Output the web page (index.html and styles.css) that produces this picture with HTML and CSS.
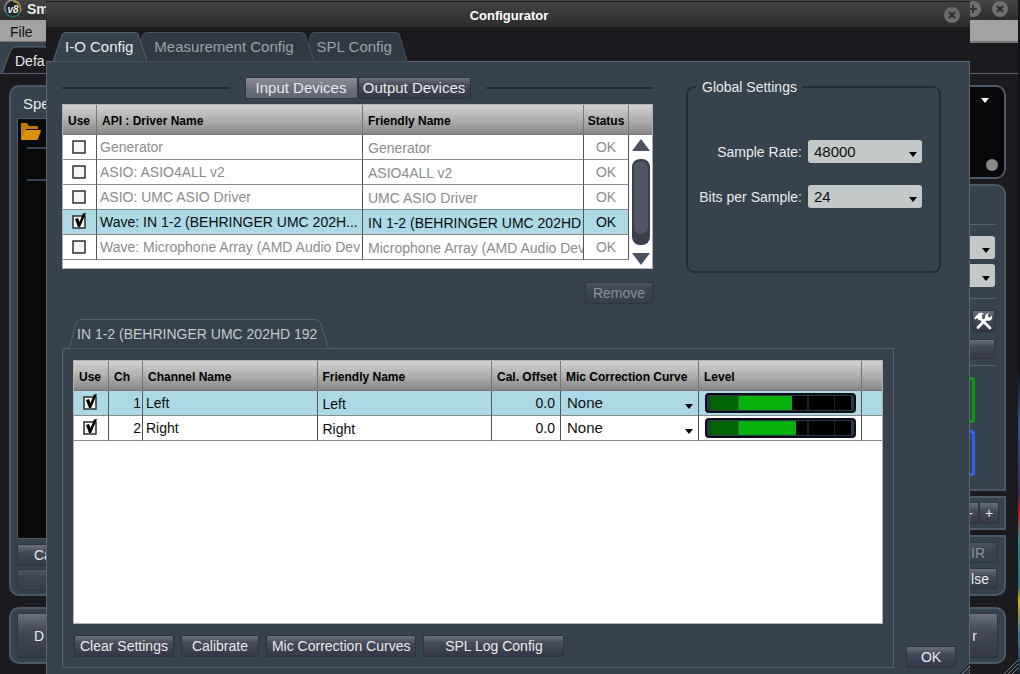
FILE: index.html
```html
<!doctype html>
<html lang="en">
<head>
    <meta charset="UTF-8">
    <title>Configurator</title>
    <link rel="stylesheet" href="styles.css">
</head>
<body>
<!-- main window -->
<div class="window">
    <div class="titlebar">
        <svg class="logo" width="18" height="18" viewBox="0 0 18 18">
            <circle cx="9" cy="9" r="8" fill="#1d2326"/>
            <path d="M2 12A7.6 7.6 0 0 1 15 4" fill="none" stroke="#8d8f8c" stroke-width="1.5"/>
            <path d="M9 1.4A7.6 7.6 0 0 1 16 12" fill="none" stroke="#b98f35" stroke-width="1.6"/>
            <path d="M2 12A7.6 7.6 0 0 0 16 12" fill="none" stroke="#1f6d62" stroke-width="1.8"/>
            <text x="9" y="13" text-anchor="middle" class="logo-text">v8</text>
        </svg>
        <span class="app-name">Sm</span>
        <button class="round" aria-label="Maximize">
            <svg width="16" height="16" viewBox="0 0 16 16"><circle cx="8" cy="8" r="8" fill="#6f6f6f"/><path d="M8 4v8M4 8h8" stroke="#333" stroke-width="2"/></svg>
        </button>
        <button class="round" aria-label="Close window">
            <svg width="16" height="16" viewBox="0 0 16 16"><circle cx="8" cy="8" r="8" fill="#6f6f6f"/><path d="M5 5l6 6M11 5l-6 6" stroke="#333" stroke-width="2.4"/></svg>
        </button>
    </div>
    <div class="menubar"><button>File</button></div>
    <div class="view-tabs">
        <svg width="80" height="32" viewBox="0 0 80 32"><path d="M0 0H80V5H16Q12 5 10 10L3 31H0Z" fill="#36424e"/><path d="M0 31.5H2L10 10Q12 5 16 5H80" fill="none" stroke="#56646f"/></svg>
        <button>Defa</button>
    </div>
    <div class="main">
        <div class="column left">
            <div class="panel grow">
                <h2>Spe</h2>
                <div class="data-list">
                    <svg width="22" height="18" viewBox="0 0 22 18"><path d="M1 16V1q0-1 1-1h5l2 3h8q1 0 1 1v2H6L2 17Z" fill="#c27c05"/><path d="M5 7h15q1 0 1 1l-3 8q0 1-2 1H1Z" fill="#dd920c"/></svg>
                    <hr><hr>
                </div>
                <button class="btn">Ca</button>
                <button class="btn dim" aria-label="Empty"></button>
            </div>
            <div class="panel dock"><button class="btn">D</button></div>
        </div>
        <div class="column right">
            <div class="panel meter-view">
                <svg width="8" height="5" viewBox="0 0 8 5"><path d="M0 0h8L4 5Z" fill="#fff"/></svg>
                <span class="dot"></span>
            </div>
            <div class="panel grow controls">
                <hr>
                <select aria-label="Banding"><option></option></select>
                <select aria-label="Averaging"><option></option></select>
                <hr>
                <button class="btn tool" aria-label="Settings">
                    <svg width="19" height="18" viewBox="0 0 19 18"><path d="M6 6L16 16M13 6L4 15.500" stroke="#fff" stroke-width="2.800" stroke-linecap="round"/><path d="M0 6L5 1q3-1 5 1L7.500 3l1 2-3.500 3.500-2-2.500-1.500 1.500Z" fill="#fff"/><path d="M11 7q-1-5 4-6l-1.500 3 2 1.500 2.500-2q1 5-4 5.500Z" fill="#fff"/></svg>
                </button>
                <button class="btn flat" aria-label="Preset"></button>
                <hr>
                <div class="engine green"></div>
                <div class="engine blue"></div>
            </div>
            <div class="panel square pair"><button class="btn">-</button><button class="btn plus">+</button></div>
            <div class="panel low">
                <button class="btn dim">IR</button>
                <button class="btn">lse</button>
            </div>
            <div class="panel dock"><button class="btn">r</button></div>
        </div>
    </div>
    <svg class="grip" width="14" height="14" viewBox="0 0 14 14"><path d="M0 14L14 0M4 14L14 4M8 14L14 8" stroke="#7d7d80"/></svg>
</div>

<!-- configurator dialog -->
<div class="dialog" role="dialog" aria-labelledby="dialog-title">
    <div class="dialog-title">
        <h1 id="dialog-title">Configurator</h1>
        <button class="round" aria-label="Close">
            <svg width="16" height="16" viewBox="0 0 16 16"><circle cx="8" cy="8" r="8" fill="#6a6a6a"/><path d="M5 5l6 6M11 5l-6 6" stroke="#303030" stroke-width="2.4"/></svg>
        </button>
    </div>
    <div class="tabs">
        <button class="tab active">
            <svg width="94" height="30" viewBox="0 0 94 30" preserveAspectRatio="none"><path d="M0 29.5L9 3Q10 .5 13 .5H81Q84 .5 85 3L94 29.5"/></svg>
            <span>I-O Config</span>
        </button>
        <button class="tab second">
            <svg width="174" height="30" viewBox="0 0 174 30" preserveAspectRatio="none"><path d="M0 29.5V8L2 3Q3 .5 6 .5H161Q164 .5 165 3L174 29.5"/></svg>
            <span>Measurement Config</span>
        </button>
        <button class="tab third">
            <svg width="98" height="30" viewBox="0 0 98 30" preserveAspectRatio="none"><path d="M0 29.5V8L2 3Q3 .5 6 .5H86Q89 .5 90 3L98 29.5"/></svg>
            <span>SPL Config</span>
        </button>
    </div>
    <div class="dialog-body">
        <div class="top">
            <div class="devices">
                <div class="switch">
                    <span class="rule"></span>
                    <div class="switch-buttons">
                        <button class="btn on">Input Devices</button><button class="btn">Output Devices</button>
                    </div>
                    <span class="rule"></span>
                </div>
                <div class="device-list">
                    <table class="device-table">
                        <thead>
                            <tr><th class="use">Use</th><th>API : Driver Name</th><th class="friendly">Friendly Name</th><th class="status">Status</th></tr>
                        </thead>
                        <tbody>
                            <tr>
                                <td class="use"><input type="checkbox" aria-label="Use Generator"></td>
                                <td>Generator</td><td class="friendly">Generator</td><td class="status">OK</td>
                            </tr>
                            <tr>
                                <td class="use"><input type="checkbox" aria-label="Use ASIO4ALL"></td>
                                <td>ASIO: ASIO4ALL v2</td><td class="friendly">ASIO4ALL v2</td><td class="status">OK</td>
                            </tr>
                            <tr>
                                <td class="use"><input type="checkbox" aria-label="Use UMC ASIO Driver"></td>
                                <td>ASIO: UMC ASIO Driver</td><td class="friendly">UMC ASIO Driver</td><td class="status">OK</td>
                            </tr>
                            <tr class="selected">
                                <td class="use"><input type="checkbox" checked aria-label="Use IN 1-2"></td>
                                <td>Wave: IN 1-2 (BEHRINGER UMC 202H...</td><td class="friendly">IN 1-2 (BEHRINGER UMC 202HD</td><td class="status">OK</td>
                            </tr>
                            <tr>
                                <td class="use"><input type="checkbox" aria-label="Use Microphone Array"></td>
                                <td>Wave: Microphone Array (AMD Audio Dev</td><td class="friendly">Microphone Array (AMD Audio Dev</td><td class="status">OK</td>
                            </tr>
                        </tbody>
                    </table>
                    <div class="scroll">
                        <div class="scroll-head"></div>
                        <svg width="20" height="128" viewBox="0 0 20 128">
                            <path d="M10 1L19 13H1Z" fill="#4b5161"/>
                            <rect x="1" y="21" width="18" height="86" rx="8" fill="#3a404d"/>
                            <rect x="3" y="23" width="14" height="73" rx="7" fill="#505666"/>
                            <path d="M10 127L19 115H1Z" fill="#4b5161"/>
                        </svg>
                    </div>
                </div>
                <button class="btn dim remove" disabled>Remove</button>
            </div>
            <fieldset class="global">
                <legend>Global Settings</legend>
                <div class="field">
                    <label for="rate">Sample Rate:</label>
                    <select id="rate"><option>48000</option></select>
                </div>
                <div class="field">
                    <label for="bits">Bits per Sample:</label>
                    <select id="bits"><option>24</option></select>
                </div>
            </fieldset>
        </div>
        <div class="bottom">
            <div class="channels">
                <div class="tabs sub">
                    <button class="tab active">
                        <svg width="264" height="30" viewBox="0 0 264 30" preserveAspectRatio="none"><path d="M0 29.5Q2 29.5 3 27L9 4Q10 .5 14 .5H250Q254 .5 255 4L262 26Q263 29.5 264 29.5"/></svg>
                        <span>IN 1-2 (BEHRINGER UMC 202HD 192</span>
                    </button>
                </div>
                <div class="channel-panel">
                    <div class="channel-list">
                        <table class="channel-table">
                            <thead>
                                <tr><th class="use">Use</th><th class="ch">Ch</th><th>Channel Name</th><th>Friendly Name</th><th class="offset">Cal. Offset</th><th class="curve">Mic Correction Curve</th><th class="level">Level</th><th class="end"></th></tr>
                            </thead>
                            <tbody>
                                <tr class="selected">
                                    <td class="use"><input type="checkbox" checked aria-label="Use channel 1"></td>
                                    <td class="ch">1</td><td>Left</td><td class="friendly">Left</td><td class="offset">0.0</td>
                                    <td class="curve"><select aria-label="Curve for channel 1"><option>None</option></select></td>
                                    <td class="level"><div class="meter"><div class="track"><div class="fill" style="width: 58%"></div></div></div></td>
                                    <td class="end"></td>
                                </tr>
                                <tr>
                                    <td class="use"><input type="checkbox" checked aria-label="Use channel 2"></td>
                                    <td class="ch">2</td><td>Right</td><td class="friendly">Right</td><td class="offset">0.0</td>
                                    <td class="curve"><select aria-label="Curve for channel 2"><option>None</option></select></td>
                                    <td class="level"><div class="meter"><div class="track"><div class="fill" style="width: 61%"></div></div></div></td>
                                    <td class="end"></td>
                                </tr>
                            </tbody>
                        </table>
                    </div>
                    <div class="actions">
                        <button class="btn">Clear Settings</button>
                        <button class="btn">Calibrate</button>
                        <button class="btn">Mic Correction Curves</button>
                        <button class="btn wide">SPL Log Config</button>
                    </div>
                </div>
            </div>
            <button class="btn ok">OK</button>
        </div>
    </div>
    <svg class="grip" width="10" height="10" viewBox="0 0 10 10"><path d="M0 10L10 0M4 10L10 4M7 10L10 7" stroke="#15171b"/><path d="M2 10L10 2" stroke="#77808a"/></svg>
</div>
</body>
</html>
```

FILE: styles.css
```css
* {
    box-sizing: border-box;
    margin: 0;
    padding: 0;
}

body {
    height: 100vh;
    min-height: 640px;
    position: relative;
    overflow: hidden;
    font: 14px/18px "Liberation Sans", Arial, sans-serif;
    color: #e8eaec;
    background: linear-gradient(#15141a 55%, #2c4f9c 63%, #3a2a60 73%, #d01010 76%, #2f8a8c 80%, #1d6f7c 87%, #e0b010 89%, #3080a0 94%, #123 100%);
}

button,
select {
    font: inherit;
    color: inherit;
    border: 0;
    background: none;
}

hr {
    border: 0;
    height: 1px;
    background: #56646f;
}

/* buttons */
.btn {
    height: 22px;
    padding: 0 6px;
    border: 1px solid #2c3541;
    border-radius: 2px;
    background: linear-gradient(#6d717d, #454b5a 35%, #34384a);
    white-space: nowrap;
}

.btn.on {
    background: linear-gradient(#8b8e98, #6d7280 50%, #606575);
}

.btn.dim {
    color: #8b929b;
    background: linear-gradient(#4d5563, #3b4453 40%, #363f4d);
}

.round {
    width: 16px;
    height: 16px;
}

.round svg {
    display: block;
}

select {
    appearance: none;
    height: 23px;
    padding: 0 6px;
    border-radius: 3px;
    color: #111;
    font-size: 15px;
    background: #c3c9c9 url("data:image/svg+xml,%3Csvg xmlns='http://www.w3.org/2000/svg' width='8' height='5'%3E%3Cpath d='M0 0h8L4 5z'/%3E%3C/svg%3E") no-repeat right 5px bottom 6px;
}

input[type="checkbox"] {
    appearance: none;
    display: block;
    width: 16px;
    height: 18px;
    margin: 0 auto;
    background: url("data:image/svg+xml,%3Csvg xmlns='http://www.w3.org/2000/svg' width='16' height='18'%3E%3Crect x='1' y='3' width='12' height='12' fill='%23f4f4f4' stroke='%23222' stroke-width='1.4'/%3E%3C/svg%3E") no-repeat;
}

input[type="checkbox"]:checked {
    background-image: url("data:image/svg+xml,%3Csvg xmlns='http://www.w3.org/2000/svg' width='16' height='18'%3E%3Crect x='1' y='3' width='12' height='12' fill='%23f4f4f4' stroke='%23222' stroke-width='1.4'/%3E%3Cpath d='M3 6l3-1 1.500 4 3.500-8.500 3-.5-6 14H6z'/%3E%3C/svg%3E");
}

/* main window */
.window {
    height: 100%;
    margin-right: 2px;
    display: flex;
    flex-direction: column;
    background: #1b1a1f;
}

.titlebar {
    height: 23px;
    display: flex;
    align-items: center;
    gap: 11px;
    padding: 0 10px 2px 4px;
    background: linear-gradient(#444, #2c2c2c);
}

.logo-text {
    font: italic bold 10px "Liberation Sans", Arial, sans-serif;
    fill: #eee;
}

.app-name {
    margin-left: -6px;
    margin-right: auto;
    font-weight: bold;
}

.menubar {
    height: 23px;
    padding-left: 10px;
    background: #a2a2a2;
    border-bottom: 2px solid #777;
    color: #111;
}

.menubar button {
    height: 22px;
    padding-top: 2px;
}

.view-tabs {
    height: 31px;
    display: flex;
    align-items: center;
    border-bottom: 1px solid #5b5e74;
}

.view-tabs button {
    margin-left: -65px;
    padding-top: 5px;
}

.view-tabs svg {
    flex: none;
}

.main {
    flex: 1;
    display: flex;
    justify-content: space-between;
    padding: 11px 12px 10px 9px;
}

.column {
    width: 60px;
    display: flex;
    flex-direction: column;
    gap: 5px;
}

.column.left {
    gap: 11px;
}

.panel {
    display: flex;
    flex-direction: column;
    gap: 3px;
    padding: 6px 6px 3px;
    border: 2px solid #4b5a66;
    border-radius: 10px;
    background: #36424e;
}

.grow {
    flex: 1;
}

.panel h2 {
    height: 22px;
    padding-left: 6px;
    font-size: 15px;
    font-weight: normal;
    line-height: 22px;
}

.data-list {
    flex: 1;
    margin-bottom: 2px;
    padding-top: 4px;
    padding-left: 2px;
    border: 1px solid #4b5a66;
    background: #0a0a0a;
}

.data-list svg {
    display: block;
}

.data-list hr {
    height: 2px;
    margin: 6px 0 30px 7px;
    background: #36424e;
}

.left .btn {
    text-align: left;
    padding-left: 16px;
}

.dock {
    height: 57px;
    padding: 4px 6px;
}

.dock .btn {
    height: 46px;
}

.right .btn {
    text-align: right;
}

.meter-view {
    height: 94px;
    background: #070709;
    align-items: flex-end;
    justify-content: space-between;
    padding: 11px 6px 6px;
}

.meter-view svg {
    margin-right: 9px;
}

.dot {
    width: 12px;
    height: 12px;
    border-radius: 50%;
    background: #8a8a8a;
}

.controls {
    gap: 0;
    padding: 37px 9px 6px 6px;
    border-radius: 10px 10px 0 0;
}

.controls hr {
    margin: 1px 0 11px;
}

.controls select {
    flex: none;
    margin-bottom: 5px;
}

.controls select + hr {
    margin-top: 6px;
}

.tool {
    width: 23px;
    padding: 1px;
    align-self: flex-end;
    margin-bottom: 7px;
}

.tool svg {
    display: block;
}

.flat {
    height: 20px;
    margin-bottom: 5px;
}

.engine {
    height: 46px;
    margin-right: 20px;
    margin-bottom: 7px;
    border: 3px solid #04a004;
    border-radius: 3px;
}

.engine.blue {
    border-color: #2d62f0;
}

.square {
    border-radius: 0;
}

.pair {
    height: 34px;
    flex-direction: row;
    gap: 0;
    padding: 4px 5px;
}

.pair .btn {
    flex: 1;
    padding: 0 5px;
}

.pair .plus {
    flex: none;
    width: 20px;
    padding: 0;
    text-align: center;
}

.low {
    height: 61px;
    margin-bottom: 6px;
    padding: 5px 7px;
    border-radius: 0 0 10px 10px;
    gap: 5px;
}

.low .dim {
    padding-right: 11px;
}

.low .btn:last-child {
    padding-right: 7px;
}

.right .dock .btn {
    padding-right: 20px;
}

.grip {
    position: absolute;
    right: 2px;
    bottom: 0;
}

/* dialog */
.dialog {
    position: absolute;
    top: 1px;
    right: 50px;
    bottom: 0;
    left: 46px;
    display: flex;
    flex-direction: column;
    border-top: 1px solid #1c1c1c;
    background: #1b1a1f;
}

.dialog .grip {
    right: 0;
}

.dialog-title {
    height: 25px;
    display: flex;
    align-items: center;
    padding: 0 10px 0 28px;
    background: linear-gradient(#434343, #2c2c2c);
}

.dialog-title h1 {
    flex: 1;
    padding-top: 3px;
    font-size: 13px;
    text-align: center;
    color: #fff;
}

.tabs {
    display: flex;
    height: 30px;
    margin: 5px 0 -1px 7px;
    position: relative;
    z-index: 1;
}

.tab {
    position: relative;
    height: 30px;
    padding: 0 14px 0 12px;
    font-size: 15px;
    color: #9aa1a8;
    white-space: nowrap;
}

.tab.active {
    z-index: 2;
    color: #e8eaec;
}

.tab.second {
    z-index: 1;
    margin-left: -6px;
    padding: 0 21px 0 13px;
}

.tab.third {
    margin-left: -6px;
    padding: 0 15px 0 8px;
}

.tab svg {
    position: absolute;
    top: 0;
    left: 0;
    width: 100%;
    height: 30px;
    fill: #303a45;
    stroke: #46525e;
}

.tab.active svg {
    fill: #36424e;
    stroke: #56646f;
}

.tab span {
    position: relative;
}

.dialog-body {
    flex: 1;
    display: flex;
    flex-direction: column;
    padding: 15px 13px 6px 15px;
    border: 1px solid #5a6672;
    border-bottom: 0;
    background: #36424e;
}

.top {
    display: flex;
    align-items: flex-start;
    gap: 33px;
}

.devices {
    flex: 1;
    display: flex;
    flex-direction: column;
}

.switch {
    display: flex;
    align-items: center;
    gap: 15px;
}

.switch-buttons {
    display: flex;
}

.switch .btn {
    width: 113px;
    height: 22px;
    padding: 0;
    font-size: 15px;
}

.rule {
    flex: 1;
    height: 2px;
    background: #202b36;
}

/* tables */
.device-list {
    display: flex;
    margin-top: 5px;
    padding-bottom: 8px;
    border: 1px solid #b0b0b0;
    background: #fff;
}

table {
    flex: 1;
    width: 100%;
    table-layout: fixed;
    border-collapse: separate;
    border-spacing: 0;
    color: #0c0c0c;
}

th {
    height: 30px;
    padding: 2px 0 0 5px;
    border-right: 1px solid #777;
    border-bottom: 1px solid #777;
    font-size: 12px;
    text-align: left;
    white-space: nowrap;
    color: #000;
    background: linear-gradient(#d2d2d2, #b0b0b0 50%, #878787);
}

td {
    height: 25px;
    padding: 0 0 0 3px;
    border-right: 1px solid #555;
    border-bottom: 1px solid #8a8a8a;
    overflow: hidden;
    white-space: nowrap;
}

.selected td {
    background: #add8e5;
}

th.use {
    width: 35px;
}

td.use {
    padding: 0;
}

.device-table th.use {
    width: 34px;
}

.device-table tr:not(.selected) td {
    color: #8c8c8c;
}

.device-table .friendly {
    width: 221px;
}

td.friendly {
    padding: 2px 0 0 5px;
}

.device-table .status {
    width: 45px;
    padding-left: 0;
    text-align: center;
}

.scroll {
    width: 23px;
}

.scroll-head {
    height: 30px;
    border-bottom: 1px solid #777;
    background: linear-gradient(#d2d2d2, #b0b0b0 50%, #878787);
}

.scroll svg {
    display: block;
    margin: 3px 0 -8px 2px;
}

.remove {
    width: 68px;
    margin-top: 13px;
    align-self: flex-end;
}

/* global settings */
.global {
    width: 255px;
    height: 196px;
    margin-right: 15px;
    border: 2px solid #232e39;
    border-radius: 8px;
}

.global legend {
    margin-left: 8px;
    padding: 0 5px 0 6px;
    line-height: 20px;
}

.field {
    display: flex;
    align-items: center;
    justify-content: flex-end;
    gap: 6px;
    margin: 0 17px 22px 0;
}

.global legend + .field {
    margin-top: 43px;
}

.field select {
    width: 114px;
}

/* channels */
.bottom {
    flex: 1;
    display: flex;
    align-items: flex-end;
    gap: 12px;
    margin-top: 15px;
}

.channels {
    flex: 1;
    align-self: stretch;
    display: flex;
    flex-direction: column;
}

.tabs.sub {
    margin: 0 0 -1px 5px;
}

.sub .tab {
    padding: 0 12px 0 10px;
    font-size: 14px;
    color: #c5cacf;
}

.channel-panel {
    flex: 1;
    display: flex;
    flex-direction: column;
    padding: 11px 10px 10px;
    border: 1px solid #56646f;
}

.channel-list {
    flex: 1;
    border: 1px solid #b0b0b0;
    background: #fff;
}

.channel-table .ch {
    width: 34px;
}

td.ch {
    padding: 0 1px;
    text-align: right;
}

.channel-table .offset {
    width: 69px;
}

td.offset {
    padding-right: 5px;
    text-align: right;
}

.channel-table .curve {
    width: 138px;
}

td.curve {
    padding: 0;
}

td.curve select {
    display: block;
    width: 100%;
    background-color: transparent;
}

.channel-table .level {
    width: 163px;
}

td.level {
    padding: 0 5px 0 6px;
}

.channel-table .end {
    width: 20px;
    border-right: 0;
}

.meter {
    height: 20px;
    padding: 1px 3px;
    border: 2px solid #0c1016;
    border-radius: 4px;
    background: #2a3744;
}

.track {
    height: 14px;
    background: linear-gradient(to right, #000 69%, #222 69% 70%, #000 70% 88%, #222 88% 89%, #000 89%);
}

.fill {
    height: 100%;
    background: linear-gradient(to right, #036403 28px, #3a6a3a 28px 29px, #07b10b 29px);
}

.actions {
    display: flex;
    gap: 7px;
    padding: 11px 1px 0;
}

.actions .btn {
    min-width: 78px;
    padding: 0 5px;
}

.actions .wide {
    min-width: 141px;
}

.ok {
    width: 50px;
}
```
